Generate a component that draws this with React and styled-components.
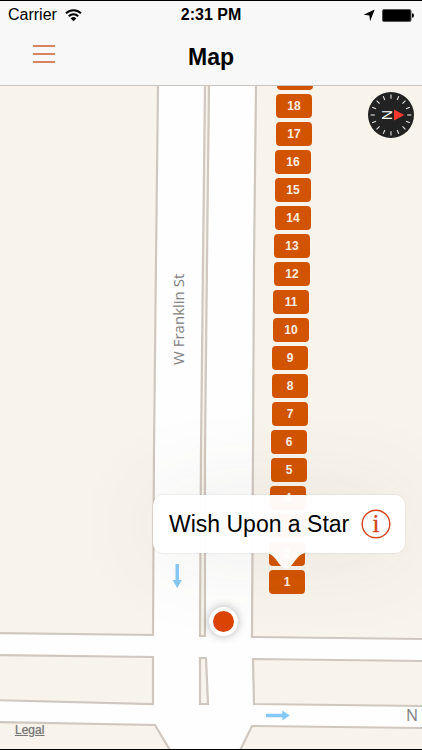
import React from "react";
import styled, { createGlobalStyle } from "styled-components";

const PIN_COUNT = 19;
// fully behind the callout, so it gets no visible number
const COVERED_PIN = 3;

// lowest pin is number 1, the row leans slightly to the right as it goes up
const pins = Array.from({ length: PIN_COUNT }, (_, i) => {
  const number = PIN_COUNT - i;
  return {
    number,
    left: Math.round(269 + (number - 1) * 0.43),
    top: 569 - (number - 1) * 28,
  };
});

const blocks = [
  "-10,60 158,60 158,86 156,260 154,450 153,635 -10,633",
  "205,60 209,60 209,86 207,260 205,450 205,636 200,636 201,450 203,260 205,86",
  "256,60 2400,60 2400,660 422,639 252,637 253,450 254,260 256,86",
  "-10,655 153,657 153,704 -10,700",
  "200,658 206,658 208,704 200,704",
  "253,659 422,661 2400,684 2400,728 422,706 254,704",
  "-10,722 155,725 183,772 183,2000 -10,2000",
  "252,726 422,728 2400,750 2400,2000 228,2000 228,775",
];

const ticks = Array.from({ length: 16 }, (_, i) => i * 22.5);

const App = () => {
  return (
    <>
      <GlobalStyle />
      <Screen>
        <Header>
          <StatusBar>
            <Carrier>
              Carrier
              <svg width="17" height="14" viewBox="0 0 17 14">
                <g fill="none" stroke="#000" strokeWidth="2">
                  <path d="M1 5.2a10.7 10.7 0 0 1 15 0" />
                  <path d="M3.8 8.2a6.7 6.7 0 0 1 9.4 0" />
                </g>
                <path d="M8.5 13.2 5.7 10.4a4 4 0 0 1 5.6 0z" />
              </svg>
            </Carrier>
            <Clock>2:31 PM</Clock>
            <Indicators>
              <svg width="12" height="13" viewBox="0 0 12 13">
                <path d="M11.7.6 7.1 12.2 6.4 6.6.6 5.7z" />
              </svg>
              <svg width="32" height="13" viewBox="0 0 32 13">
                <rect
                  x=".5"
                  y=".5"
                  width="28.5"
                  height="12"
                  rx="1.5"
                  stroke="#555"
                />
                <path d="M30 4.3a2 2.2 0 0 1 0 4.4z" />
              </svg>
            </Indicators>
          </StatusBar>
          <NavBar>
            <MenuButton aria-label="Menu">
              <svg width="22" height="18" viewBox="0 0 22 18">
                <path
                  d="M0 1h22M0 9h22M0 17h22"
                  stroke="#cf5a2c"
                  strokeWidth="1.7"
                />
              </svg>
            </MenuButton>
            <Title>Map</Title>
          </NavBar>
        </Header>

        <Map>
          <Streets>
            <g transform="translate(0 -1)">
              {blocks.map((points) => (
                <polygon key={points} points={points} />
              ))}
              <g fill="#86c9f9">
                <path d="M175.5 564h3.400v16h3L177.200 588l-4.700-8h3z" />
                <path d="M266 713.800h16.300v-3.200l7.500 4.900-7.500 4.900v-3.200h-16.300z" />
              </g>
              <StreetName
                x="184"
                y="365"
                $size={15}
                transform="rotate(-90 184 365)"
              >
                W Franklin St
              </StreetName>
              <StreetName x="406" y="721" $size={16}>
                N
              </StreetName>
            </g>
          </Streets>

          {pins.map(({ number, left, top }) => (
            <Pin key={number} aria-label={`Stop ${number}`} style={{ left, top }}>
              {number !== COVERED_PIN && number}
            </Pin>
          ))}

          <UserDot />

          <Callout>
            <CalloutTitle>Wish Upon a Star</CalloutTitle>
            <InfoButton aria-label="Details">
              <svg width="30" height="30" viewBox="0 0 30 30">
                <circle
                  cx="15"
                  cy="15"
                  r="13.8"
                  fill="none"
                  stroke="#d2481a"
                  strokeWidth="1.4"
                />
                <text
                  x="15"
                  y="23"
                  textAnchor="middle"
                  fill="#d2481a"
                  stroke="#d2481a"
                  strokeWidth=".4"
                  fontFamily='"Liberation Serif", serif'
                  fontSize="25"
                >
                  i
                </text>
              </svg>
            </InfoButton>
            <Tail viewBox="0 0 42 16">
              <path d="M0 0c8 0 11 7 16 13q5 5 10 0c5-6 8-13 16-13z" />
            </Tail>
          </Callout>

          <Compass aria-label="Compass">
            <svg width="46" height="46" viewBox="-23 -23 46 46">
              <circle r="23" fill="#222" />
              {ticks.map((angle) => (
                <path
                  key={angle}
                  d="M0-16.200v-4.200"
                  stroke="#e4e4e4"
                  strokeWidth="1.100"
                  transform={`rotate(${angle})`}
                />
              ))}
              <path d="M3-5.500 13.300 0 3 5.500z" fill="#f8392f" />
              <text
                transform="translate(-9 0) rotate(90)"
                textAnchor="middle"
                fill="#fff"
                fontFamily='"Liberation Sans", sans-serif'
                fontSize="14"
              >
                N
              </text>
            </svg>
          </Compass>

          <Legal href="#legal">Legal</Legal>
        </Map>
      </Screen>
    </>
  );
};

const GlobalStyle = createGlobalStyle`
  * {
    box-sizing: border-box;
  }
  body {
    margin: 0;
    font-family: "Liberation Sans", Arial, sans-serif;
    color: #000;
  }
  button {
    padding: 0;
    border: none;
    background: none;
    font-family: inherit;
    cursor: pointer;
  }
  svg {
    display: block;
  }
`;

/* the header and the map share one cell, the map runs under the header */
const Screen = styled.main`
  display: grid;
  min-height: 100vh;
  border-top: 1px solid #000;
  border-bottom: 1px solid #000;
`;

const Header = styled.header`
  grid-area: 1 / 1;
  align-self: start;
  z-index: 1;
  background: #f8f8f8;
  border-bottom: 1px solid #c9c6c2;
`;

const StatusBar = styled.div`
  display: grid;
  grid-template-columns: 1fr auto 1fr;
  align-items: center;
  height: 28px;
  padding: 0 8px;
  font-size: 16px;
`;

const Carrier = styled.div`
  display: flex;
  align-items: center;
  gap: 8px;
`;

const Clock = styled.div`
  font-weight: 700;
`;

const Indicators = styled.div`
  display: flex;
  justify-content: flex-end;
  gap: 7px;
`;

const NavBar = styled.nav`
  display: grid;
  grid-template-columns: 1fr auto 1fr;
  align-items: center;
  height: 56px;
  padding: 0 25px;
`;

const MenuButton = styled.button`
  justify-self: start;
  padding: 8px;
  margin-bottom: 6px;
`;

const Title = styled.h1`
  margin: 0;
  font-size: 23px;
  font-weight: 700;
`;

const Map = styled.section`
  grid-area: 1 / 1;
  position: relative;
  overflow: hidden;
  background: #fefefe;
`;

const Streets = styled.svg`
  position: absolute;
  width: 100%;
  height: 100%;
  polygon {
    fill: #f8f4ec;
    stroke: #d0c7be;
    stroke-width: 2.2;
  }
`;

const StreetName = styled.text`
  fill: #808080;
  font-family: "Open Sans", "Noto Sans", sans-serif;
  font-size: ${(props) => props.$size}px;
`;

const Pin = styled.button`
  position: absolute;
  width: 36px;
  height: 24px;
  && {
    border-radius: 4px;
    background: #d25400;
    color: #fbeee0;
    font-size: 12px;
    font-weight: 700;
  }
`;

const UserDot = styled.div`
  position: absolute;
  left: 209px;
  top: 606px;
  width: 29px;
  height: 29px;
  border: 4px solid #fff;
  border-radius: 50%;
  background: #dc4405;
  box-shadow: 0 0 10px rgba(0, 0, 0, 0.3);
`;

const Callout = styled.div`
  position: absolute;
  left: 153px;
  top: 494px;
  display: flex;
  align-items: center;
  gap: 12px;
  height: 58px;
  padding: 0 14px 0 16px;
  border-radius: 10px;
  background: rgba(255, 255, 255, 0.97);
  box-shadow: 0 0 2px rgba(0, 0, 0, 0.15), 0 0 90px rgba(90, 80, 60, 0.1);
`;

const CalloutTitle = styled.div`
  font-size: 23px;
  white-space: nowrap;
`;

const InfoButton = styled.button`
  flex: none;
`;

const Tail = styled.svg`
  position: absolute;
  left: 112px;
  top: 100%;
  width: 42px;
  height: 16px;
  fill: rgba(255, 255, 255, 0.97);
`;

const Compass = styled.button`
  position: absolute;
  right: 8px;
  top: 91px;
`;

const Legal = styled.a`
  position: absolute;
  left: 15px;
  bottom: 12px;
  color: #777;
  font-size: 12px;
  line-height: 14px;
  text-shadow: 0 0 1px #999;
`;

export default App;
